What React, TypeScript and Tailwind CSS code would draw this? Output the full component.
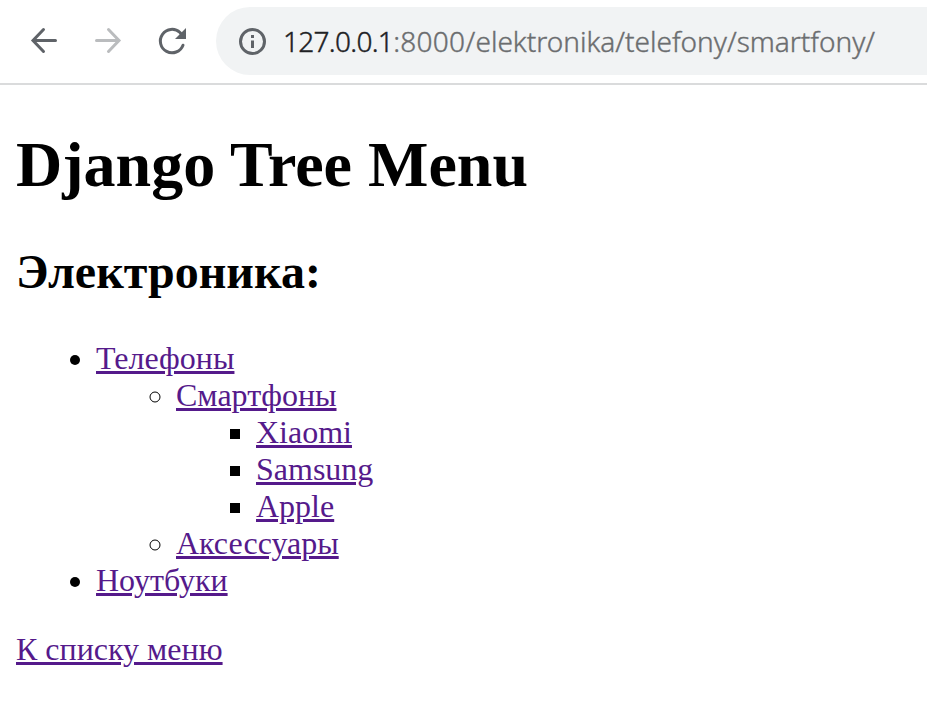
import React from "react";

const link = "text-[#551a8b] underline decoration-[3px]";

function Toolbar() {
  return (
    <header className="flex h-[85px] items-start border-b-2 border-[#dadbdc] bg-white pt-[7px]">
      <div className="flex h-[68px] w-[216px] shrink-0 items-center gap-[16px] pl-[20px]">
        <svg className="h-12 w-12" viewBox="0 0 48 48" fill="none" stroke="#5f6368" strokeWidth="3" strokeLinecap="round">
          <path d="M35.500 23.500H14M23.500 12.500 13 23.500l10.500 11" />
        </svg>
        <svg className="h-12 w-12" viewBox="0 0 48 48" fill="none" stroke="#babcbe" strokeWidth="3" strokeLinecap="round">
          <path d="M12.500 23.500H34M24.500 12.500l10.500 11-10.500 11" />
        </svg>
        <svg className="h-12 w-12" viewBox="0 0 48 48" fill="none">
          <path d="M35 28.200A11.700 11.700 0 1 1 32 15.500L34 18" stroke="#5f6368" strokeWidth="3" strokeLinecap="round" />
          <path d="M38 11v11H27z" fill="#5f6368" />
        </svg>
      </div>
      <div className="flex h-[68px] flex-1 items-center rounded-l-full bg-[#f1f3f4] pl-[22px]">
        <svg className="h-7 w-7 shrink-0" viewBox="0 0 28 28" fill="none">
          <circle cx="14.500" cy="14.500" r="12" stroke="#5f6368" strokeWidth="3" />
          <path d="M13 13.500h3V21h-3zM13 8h3v3h-3z" fill="#5f6368" />
        </svg>
        <span className="ml-[17px] whitespace-nowrap font-['Noto_Sans',sans-serif] text-[28px] leading-[38px] font-light text-[#6b6d6f] [-webkit-text-stroke:0.4px]">
          <span className="tracking-[-0.7px] text-[#202124]">127.0.0.1</span>
          <span className="tracking-[0.3px]">:8000/</span>elektronika/telefony/smartfony/
        </span>
      </div>
    </header>
  );
}

export default function App() {
  return (
    <div className="min-h-[724px] overflow-hidden bg-white text-black">
      <Toolbar />
      <main className="px-4 font-['Liberation_Serif',serif] text-[32px] leading-[37px]">
        <h1 className="mt-[43px] text-[64px] leading-[73px] font-bold">Django Tree Menu</h1>
        <h2 className="mt-[43px] text-[48px] leading-[55px] font-bold">Электроника:</h2>
        <ul className="mt-[41px] list-disc pl-20">
          <li>
            <a className={link}>Телефоны</a>
            <ul className="list-[circle] pl-20">
              <li>
                <a className={link}>Смартфоны</a>
                <ul className="list-[square] pl-20">
                  <li><a className={link}>Xiaomi</a></li>
                  <li><a className={link}>Samsung</a></li>
                  <li><a className={link}>Apple</a></li>
                </ul>
              </li>
              <li><a className={link}>Аксессуары</a></li>
            </ul>
          </li>
          <li><a className={link}>Ноутбуки</a></li>
        </ul>
        <p className="mt-8"><a className={link}>К списку меню</a></p>
      </main>
    </div>
  );
}
